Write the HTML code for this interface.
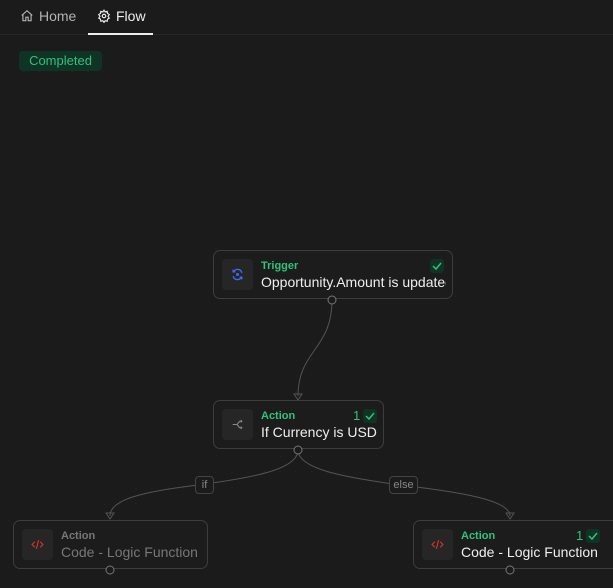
<!DOCTYPE html>
<html><head><style>
*{box-sizing:border-box;margin:0;padding:0}
body{width:613px;height:588px;overflow:hidden;background:#1b1b1b;font-family:"Liberation Sans",sans-serif;position:relative;
background-image:radial-gradient(circle,#262626 0.8px,transparent 1px);background-size:16px 16px;}
.top{position:absolute;left:0;top:0;width:613px;height:35px;border-bottom:1px solid #262626;background:#1b1b1b}
.tab{position:absolute;top:8px;font-size:14px;color:#b3b3b3}
.ul{position:absolute;left:88px;top:33px;width:65px;height:2px;background:#eee}
.badge{position:absolute;left:19px;top:51px;width:83px;height:20px;background:#0f3325;border-radius:4px;color:#2fc27a;font-size:13px;line-height:20px;text-align:center}
.node{position:absolute;height:49px;border:1px solid #3d3d3d;border-radius:7px;background:#1c1c1c}
.ic{position:absolute;left:8px;top:8px;width:31px;height:31px;border-radius:4px;background:#262626}
.lab{position:absolute;left:47px;top:9px;font-size:11px;font-weight:bold;color:#2fc27a}
.ttl{position:absolute;left:47px;top:23px;font-size:14px;color:#efefef;white-space:nowrap;overflow:hidden}
.dim .lab{color:#777}.dim .ttl{color:#777}
.chk{position:absolute;top:8px;width:14px;height:14px;background:#0f3325;border-radius:3px}
.num{position:absolute;top:7px;font-size:13px;color:#2fc27a}
.el{position:absolute;border:1px solid #444;border-radius:4px;background:#1b1b1b;color:#888;font-size:11px;text-align:center;line-height:16px;height:18px}
</style></head><body>
<div class="top">
<svg style="position:absolute;left:20px;top:9px" width="14" height="14" viewBox="0 0 24 24" fill="none" stroke="#b3b3b3" stroke-width="2"><path d="M3 11l9-8 9 8M5 10v10h5v-6h4v6h5V10"/></svg>
<span class="tab" style="left:39px">Home</span>
<svg style="position:absolute;left:97px;top:9px" width="14" height="14" viewBox="0 0 24 24" fill="none" stroke="#eee" stroke-width="2"><circle cx="12" cy="12" r="3"/><path d="M12 2l2 3 3.5-1 .5 3.5 3 2-2 3 2 3-3 2-.5 3.5-3.5-1-2 3-2-3-3.5 1-.5-3.5-3-2 2-3-2-3 3-2 .5-3.5 3.5 1z"/></svg>
<span class="tab" style="left:116px;color:#eee">Flow</span>
<div class="ul"></div>
</div>
<div class="badge">Completed</div>
<svg style="position:absolute;left:0;top:0" width="613" height="588" fill="none" stroke="#555" stroke-width="1">
<path d="M332 300C332 350 298 350 298 396"/><path d="M294 394l4 6 4-6z"/>
<path d="M298 450C298 470 250 478 198 485C140 492 110 500 110 516"/><path d="M106 513l4 6 4-6z"/>
<path d="M298 450C298 470 350 478 400 485C460 492 510 500 510 516"/><path d="M506 513l4 6 4-6z"/>
</svg>
<div class="el" style="left:195px;top:476px;width:19px">if</div>
<div class="el" style="left:389px;top:476px;width:29px">else</div>
<div class="node" style="left:213px;top:250px;width:240px">
<div class="ic"><svg style="position:absolute;left:9px;top:9px" width="13" height="13" viewBox="0 0 24 24" fill="none" stroke="#3d6cf5" stroke-width="2.5"><path d="M20 9A8 8 0 0 0 5 7M4 3v4h4M4 15a8 8 0 0 0 15 2M20 21v-4h-4"/><circle cx="12" cy="12" r="1.5"/></svg></div>
<div class="lab">Trigger</div><div class="ttl" style="width:185px">Opportunity.Amount is updated</div>
<div class="chk" style="left:216px"><svg width="14" height="14" viewBox="0 0 14 14" fill="none" stroke="#2fc27a" stroke-width="1.5"><path d="M3 7l3 3 5-6"/></svg></div>
</div>
<div class="node" style="left:213px;top:400px;width:171px">
<div class="ic"><svg style="position:absolute;left:9px;top:9px" width="13" height="13" viewBox="0 0 24 24" fill="none" stroke="#888" stroke-width="2"><path d="M3 12h8l5-6h4M11 12l5 6h4M18 4l2 2-2 2M18 16l2 2-2 2"/></svg></div>
<div class="lab">Action</div><div class="ttl">If Currency is USD</div>
<div class="num" style="left:139px">1</div>
<div class="chk" style="left:149px"><svg width="14" height="14" viewBox="0 0 14 14" fill="none" stroke="#2fc27a" stroke-width="1.5"><path d="M3 7l3 3 5-6"/></svg></div>
</div>
<div class="node dim" style="left:13px;top:520px;width:195px">
<div class="ic"><svg style="position:absolute;left:9px;top:9px" width="13" height="13" viewBox="0 0 24 24" fill="none" stroke="#d33" stroke-width="2"><path d="M7 7l-5 5 5 5M17 7l5 5-5 5M14 4l-4 16"/></svg></div>
<div class="lab">Action</div><div class="ttl">Code - Logic Function</div>
</div>
<div class="node" style="left:413px;top:520px;width:220px">
<div class="ic"><svg style="position:absolute;left:9px;top:9px" width="13" height="13" viewBox="0 0 24 24" fill="none" stroke="#d33" stroke-width="2"><path d="M7 7l-5 5 5 5M17 7l5 5-5 5M14 4l-4 16"/></svg></div>
<div class="lab">Action</div><div class="ttl">Code - Logic Function</div>
<div class="num" style="left:162px">1</div>
<div class="chk" style="left:172px"><svg width="14" height="14" viewBox="0 0 14 14" fill="none" stroke="#2fc27a" stroke-width="1.5"><path d="M3 7l3 3 5-6"/></svg></div>
</div>
<svg style="position:absolute;left:0;top:0" width="613" height="588" fill="#1b1b1b" stroke="#777" stroke-width="1">
<circle cx="332" cy="300" r="4"/><circle cx="298" cy="450" r="4"/><circle cx="110" cy="570" r="4"/><circle cx="510" cy="570" r="4"/>
</svg>
</body></html>
